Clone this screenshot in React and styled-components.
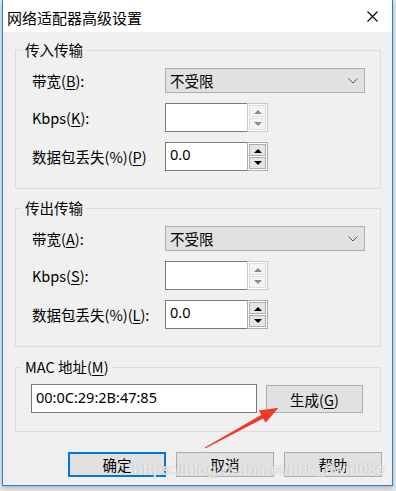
import React from "react";
import styled, { createGlobalStyle } from "styled-components";

const GlobalStyle = createGlobalStyle`
  html, body {
    margin: 0;
    padding: 0;
    background: #e9e9e9;
  }
  body {
    font-family: "Noto Sans CJK SC", "Noto Sans", sans-serif;
    color: #000;
  }
`;

export default function App() {
  return (
    <Page>
      <GlobalStyle />
      <Window>
        <TitleBar>
          <Title>网络适配器高级设置</Title>
          <CloseIcon width="11" height="11" viewBox="0 0 11 11">
            <path d="M0.5 0.5 L10.5 10.5 M10.5 0.5 L0.5 10.5" stroke="#000" strokeWidth="1.1" />
          </CloseIcon>
        </TitleBar>
        <Body>
          <Group>
            <Legend>传入传输</Legend>
            <Rows>
              <Label>
                带宽(<u>B</u>):
              </Label>
              <Select value="不受限" />
              <Label>
                Kbps(<u>K</u>):
              </Label>
              <Spin disabled />
              <Label>
                数据包丢失(%)(<u>P</u>)
              </Label>
              <Spin value="0.0" />
            </Rows>
          </Group>

          <Group $mt={9}>
            <Legend>传出传输</Legend>
            <Rows>
              <Label>
                带宽(<u>A</u>):
              </Label>
              <Select value="不受限" />
              <Label>
                Kbps(<u>S</u>):
              </Label>
              <Spin disabled />
              <Label>
                数据包丢失(%)(<u>L</u>):
              </Label>
              <Spin value="0.0" />
            </Rows>
          </Group>

          <Group $mt={10}>
            <Legend>
              MAC 地址(<u>M</u>)
            </Legend>
            <MacRow>
              <MacInput>00:0C:29:2B:47:85</MacInput>
              <GenButton>
                生成(<u>G</u>)
              </GenButton>
            </MacRow>
          </Group>

          <Footer>
            <Button $primary>确定</Button>
            <Button>取消</Button>
            <Button>帮助</Button>
          </Footer>
        </Body>
      </Window>

      <Arrow width="396" height="491" viewBox="0 0 396 491">
        <polygon
          points="204.8,447.6 261.2,414.9 258.8,410.5 278.5,407.8 265.6,422.7 263.2,418.4 205.2,448.4"
          fill="#f2382a"
        />
      </Arrow>
      <Watermark>https://blog.csdn.net/hnk_6wid08e</Watermark>
    </Page>
  );
}

function Select({ value }) {
  return (
    <SelectBox>
      <span>{value}</span>
      <svg width="10" height="6" viewBox="0 0 10 6">
        <path d="M0.5 0.5 L5 5 L9.5 0.5" fill="none" stroke="#555" strokeWidth="1" />
      </svg>
    </SelectBox>
  );
}

function Spin({ value, disabled }) {
  const arrow = disabled ? "#8a8a8a" : "#000";
  return (
    <SpinBox>
      <SpinInput>{value}</SpinInput>
      <SpinButtons $disabled={disabled}>
        <SpinBtn $disabled={disabled}>
          <svg width="8" height="5" viewBox="0 0 8 5">
            <polygon points="0,5 4,1 8,5" fill={arrow} />
          </svg>
        </SpinBtn>
        <SpinBtn $disabled={disabled}>
          <svg width="8" height="5" viewBox="0 0 8 5">
            <polygon points="0,0 8,0 4,4" fill={arrow} />
          </svg>
        </SpinBtn>
      </SpinButtons>
    </SpinBox>
  );
}

const Page = styled.div`
  position: relative;
  width: 396px;
  height: 491px;
  overflow: hidden;
`;

const Window = styled.div`
  margin-left: 2px;
  width: 391px;
  box-sizing: border-box;
  border: 1px solid #1c84d8;
  border-top: none;
  background: #f0f0f0;
  box-shadow: 0 2px 5px rgba(0, 0, 0, 0.25);
`;

const TitleBar = styled.div`
  height: 32px;
  background: #fff;
  display: flex;
  align-items: center;
  justify-content: space-between;
  padding: 0 14px 0 4px;
`;

const Title = styled.span`
  font-size: 15px;
  line-height: 20px;
  margin-top: 3px;
`;

const CloseIcon = styled.svg`
  display: block;
  margin-top: 0px;
`;

const Body = styled.div`
  padding: 8px 10px 8px 12px;
`;

const Group = styled.fieldset`
  margin: ${(p) => p.$mt || 0}px 1px 0 0;
  padding: 0;
  border: 1px solid #dcdcdc;
  min-width: 0;
`;

const Legend = styled.legend`
  margin-left: 6px;
  padding: 0 3px;
  font-size: 14.5px;
  line-height: 20px;

  u {
    text-underline-offset: 2px;
  }
`;

const Rows = styled.div`
  display: grid;
  grid-template-columns: 133px auto;
  row-gap: 10px;
  align-items: center;
  padding: 8px 15px 17px 16px;
`;

const Label = styled.div`
  font-size: 14.5px;
  line-height: 20px;
  white-space: nowrap;

  u {
    text-underline-offset: 2px;
  }
`;

const SelectBox = styled.div`
  width: 200px;
  height: 25px;
  box-sizing: border-box;
  background: #e1e1e1;
  border: 1px solid #adadad;
  display: flex;
  align-items: center;
  justify-content: space-between;
  padding: 0 6px 0 4px;
  font-size: 14.5px;
  line-height: 20px;

  svg {
    display: block;
  }
`;

const SpinBox = styled.div`
  display: flex;
  width: 103px;
  height: 29px;
`;

const SpinInput = styled.div`
  flex: 1;
  background: #fff;
  border: 1px solid #7a7a7a;
  border-right: none;
  padding: 1px 4px 0;
  font-family: "Noto Sans", sans-serif;
  font-size: 14.5px;
  line-height: 20px;
`;

const SpinButtons = styled.div`
  width: 21px;
  box-sizing: border-box;
  border: 1px solid ${(p) => (p.$disabled ? "#c9c9c9" : "#adadad")};
  background: #fff;
  display: flex;
  flex-direction: column;
  gap: 1px;
  padding: 1px;
`;

const SpinBtn = styled.div`
  flex: 1;
  box-sizing: border-box;
  border: 1px solid ${(p) => (p.$disabled ? "#dcdcdc" : "#adadad")};
  background: ${(p) => (p.$disabled ? "#f4f4f4" : "#e5e5e5")};
  display: flex;
  align-items: center;
  justify-content: center;

  svg {
    display: block;
  }
`;

const MacRow = styled.div`
  display: flex;
  gap: 9px;
  padding: 7px 16px 18px 15px;
`;

const MacInput = styled.div`
  width: 226px;
  height: 29px;
  box-sizing: border-box;
  background: #fff;
  border: 1px solid #7a7a7a;
  padding: 2px 4px 0;
  font-family: "Noto Sans", sans-serif;
  font-size: 14.5px;
  line-height: 20px;
`;

const GenButton = styled.div`
  width: 97px;
  height: 28px;
  margin-top: 1px;
  box-sizing: border-box;
  background: #e1e1e1;
  border: 1px solid #adadad;
  display: flex;
  align-items: center;
  justify-content: center;
  font-size: 14.5px;

  u {
    text-underline-offset: 2px;
  }
`;

const Footer = styled.div`
  display: flex;
  justify-content: flex-end;
  gap: 10px;
  margin-top: 20px;
`;

const Button = styled.div`
  width: 98px;
  height: 25px;
  box-sizing: border-box;
  background: #e1e1e1;
  border: ${(p) => (p.$primary ? "2px solid #0078d7" : "1px solid #adadad")};
  display: flex;
  align-items: center;
  justify-content: center;
  font-size: 14.5px;
`;

const Arrow = styled.svg`
  position: absolute;
  left: 0;
  top: 0;
  pointer-events: none;
`;

const Watermark = styled.span`
  position: absolute;
  left: 133px;
  top: 461px;
  font-family: "Liberation Sans", sans-serif;
  font-size: 16px;
  font-weight: bold;
  letter-spacing: -0.3px;
  color: rgba(255, 255, 255, 0.75);
  text-shadow: 0 0 1px rgba(120, 120, 120, 0.6);
  pointer-events: none;
  white-space: nowrap;
`;
